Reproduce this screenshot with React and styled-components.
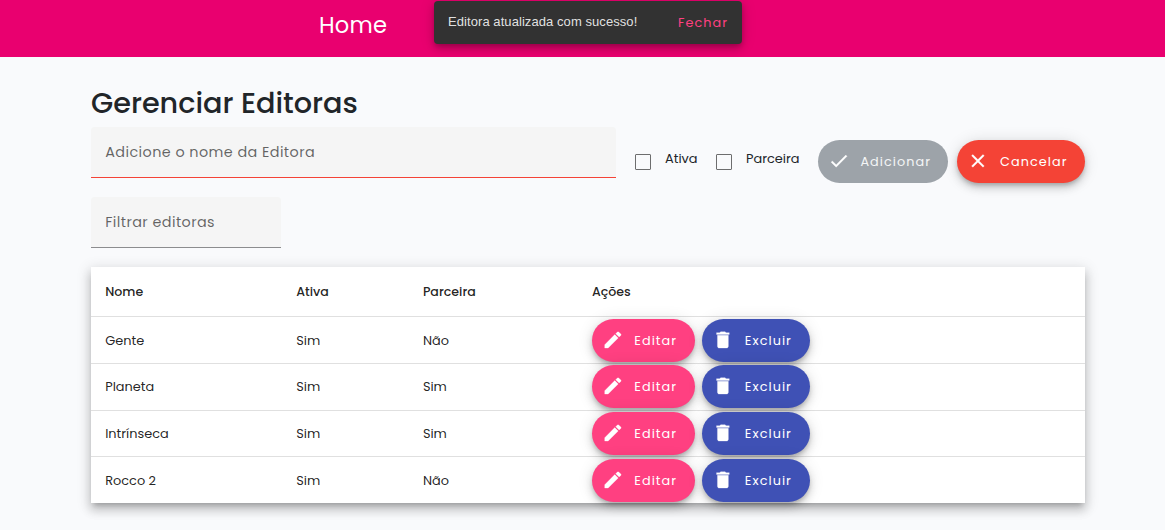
import React from 'react';
import styled, { createGlobalStyle } from 'styled-components';

const GlobalStyle = createGlobalStyle`
  * { box-sizing: border-box; }
  body {
    margin: 0;
    background: #f9fafc;
    color: #212529;
    font-family: Poppins, Inter, 'Open Sans', sans-serif;
    font-size: 12.6px;
  }
`;

const Page = styled.div`
  min-height: 530px;
`;

const Header = styled.header`
  height: 57px;
  padding: 11px 0 0 319px;
  background: #e9006f;
`;

const HomeLink = styled.a`
  display: block;
  width: max-content;
  color: #fff;
  font-size: 22.6px;
  line-height: 28px;
  letter-spacing: 0.2px;
`;

const Snackbar = styled.div`
  position: absolute;
  top: 1px;
  left: 434px;
  display: flex;
  align-items: center;
  justify-content: space-between;
  width: 308px;
  height: 43px;
  padding: 0 14px;
  border-radius: 4px;
  background: #323232;
  box-shadow: 0 3px 5px -1px rgba(0, 0, 0, 0.2), 0 5px 9px rgba(0, 0, 0, 0.14), 0 1px 16px rgba(0, 0, 0, 0.12);
`;

const Message = styled.span`
  color: rgba(255, 255, 255, 0.87);
  font-family: 'Liberation Sans', Arial, sans-serif;
  font-size: 13px;
  line-height: 18px;
  letter-spacing: 0.07px;
  padding-bottom: 2px;
`;

const CloseAction = styled.button`
  padding: 0;
  border: 0;
  background: none;
  color: #ff4081;
  font: 400 12.8px Poppins, Inter, sans-serif;
  letter-spacing: 1.05px;
`;

const Main = styled.main`
  width: 994px;
  margin-left: 91px;
  padding-top: 29px;
`;

const Title = styled.h1`
  margin: 0;
  height: 41px;
  font-size: 28.7px;
  font-weight: 500;
  line-height: 35px;
`;

const FormRow = styled.form`
  display: flex;
  align-items: flex-start;
  height: 70px;
`;

const Field = styled.label`
  display: flex;
  align-items: center;
  width: ${(p) => p.$width}px;
  height: 51px;
  padding: 0 14.2px;
  border-bottom: 1px solid ${(p) => (p.$invalid ? '#f44336' : '#8c8c8e')};
  border-radius: 4px 4px 0 0;
  background: #f5f5f5;
  color: rgba(0, 0, 0, 0.6);
  font-size: 14.4px;
  letter-spacing: 0.42px;
`;

const CheckGroup = styled.div`
  display: flex;
  gap: 16px;
  margin: 22px 0 0 19px;
`;

const CheckLabel = styled.label`
  display: flex;
  width: ${(p) => p.$width}px;
  font-size: 12.9px;
  line-height: 20px;
  white-space: nowrap;
`;

const Box = styled.span`
  flex: none;
  width: 16px;
  height: 16px;
  margin: 5px 14px 0 0;
  border: 1px solid #6d6d6e;
  border-radius: 1px;
`;

const FormButtons = styled.div`
  display: flex;
  gap: 9px;
  margin: 13px 0 0 auto;
`;

const tones = {
  muted: '#9da3a9',
  warn: '#f44336',
  accent: '#ff4081',
  primary: '#3f51b5',
};

const PillButton = styled.button`
  display: flex;
  align-items: center;
  width: ${(p) => p.$width}px;
  height: 43px;
  padding: 0 0 0 ${(p) => p.$inset}px;
  border: 0;
  border-radius: 22px;
  background: ${(p) => tones[p.$tone]};
  color: ${(p) => (p.$tone === 'muted' ? '#f4f5f6' : '#fff')};
  font: 400 12.8px Poppins, Inter, sans-serif;
  letter-spacing: 1.05px;
  white-space: nowrap;
  box-shadow: ${(p) =>
    p.$tone === 'muted'
      ? 'none'
      : '0 3px 4.5px -1px rgba(0,0,0,.2), 0 5px 9px rgba(0,0,0,.14), 0 1px 16px rgba(0,0,0,.12)'};

  svg {
    flex: none;
    width: 21.8px;
    height: 21.8px;
    margin: 0 11px 1.4px 0;
    fill: #fff;
  }
`;

const Table = styled.section`
  margin-top: 19px;
  height: 236px;
  background: #fff;
  box-shadow: 0 5px 5px -3px rgba(0, 0, 0, 0.2), 0 7px 9px 1px rgba(0, 0, 0, 0.14), 0 3px 13px 2px rgba(0, 0, 0, 0.12);
`;

const Row = styled.div`
  display: grid;
  grid-template-columns: 191px 126.7px 169px 1fr;
  align-items: center;
  height: ${(p) => (p.$head ? 50 : 46.75)}px;
  padding-left: 14.2px;
  border-bottom: 1px solid #e0e0e0;
  color: rgba(0, 0, 0, 0.87);
  font-size: ${(p) => (p.$head ? 12.6 : 12.9)}px;
  font-weight: ${(p) => (p.$head ? 500 : 400)};

  &:last-child {
    height: 46px;
    border-bottom: 0;
  }
`;

const Cell = styled.span`
  line-height: 20px;
  padding-top: 1.5px;
`;

const Actions = styled.div`
  display: flex;
  align-self: start;
  gap: 7px;
  padding-top: 1.7px;

  button {
    padding-top: 1px;
  }

  svg {
    margin-bottom: 2.4px;
  }
`;

const paths = {
  check: 'M9 16.2L4.8 12l-1.4 1.4L9 19 21 7l-1.4-1.4L9 16.2z',
  close: 'M19 6.41L17.59 5 12 10.59 6.41 5 5 6.41 10.59 12 5 17.59 6.41 19 12 13.41 17.59 19 19 17.59 13.41 12z',
  edit: 'M3 17.25V21h3.75L17.81 9.94l-3.75-3.75L3 17.25zM20.71 7.04a1 1 0 0 0 0-1.41l-2.34-2.34a1 1 0 0 0-1.41 0l-1.83 1.83 3.75 3.75 1.83-1.83z',
  trash: 'M6 19c0 1.1.9 2 2 2h8c1.1 0 2-.9 2-2V7H6v12zM19 4h-3.5l-1-1h-5l-1 1H5v2h14V4z',
};

const Icon = ({ name }) => (
  <svg viewBox="0 0 24 24" aria-hidden="true">
    <path d={paths[name]} stroke="#fff" strokeWidth="0.3" />
  </svg>
);

const publishers = [
  { name: 'Gente', active: 'Sim', partner: 'Não' },
  { name: 'Planeta', active: 'Sim', partner: 'Sim' },
  { name: 'Intrínseca', active: 'Sim', partner: 'Sim' },
  { name: 'Rocco 2', active: 'Sim', partner: 'Não' },
];

export default function App() {
  return (
    <Page>
      <GlobalStyle />
      <Header>
        <HomeLink>Home</HomeLink>
      </Header>
      <Snackbar role="status">
        <Message>Editora atualizada com sucesso!</Message>
        <CloseAction>Fechar</CloseAction>
      </Snackbar>
      <Main>
        <Title>Gerenciar Editoras</Title>
        <FormRow>
          <Field $width={525} $invalid>Adicione o nome da Editora</Field>
          <CheckGroup>
            <CheckLabel $width={65}><Box />Ativa</CheckLabel>
            <CheckLabel $width={84}><Box />Parceira</CheckLabel>
          </CheckGroup>
          <FormButtons>
            <PillButton type="button" $tone="muted" $width={130} $inset={9.6}>
              <Icon name="check" />Adicionar
            </PillButton>
            <PillButton type="button" $tone="warn" $width={128} $inset={10.3}>
              <Icon name="close" />Cancelar
            </PillButton>
          </FormButtons>
        </FormRow>
        <Field $width={190}>Filtrar editoras</Field>
        <Table>
          <Row $head>
            <span>Nome</span>
            <span>Ativa</span>
            <span>Parceira</span>
            <span>Ações</span>
          </Row>
          {publishers.map((p) => (
            <Row key={p.name}>
              <Cell>{p.name}</Cell>
              <Cell>{p.active}</Cell>
              <Cell>{p.partner}</Cell>
              <Actions>
                <PillButton $tone="accent" $width={103} $inset={9.7}>
                  <Icon name="edit" />Editar
                </PillButton>
                <PillButton $tone="primary" $width={108} $inset={10.2}>
                  <Icon name="trash" />Excluir
                </PillButton>
              </Actions>
            </Row>
          ))}
        </Table>
      </Main>
    </Page>
  );
}
